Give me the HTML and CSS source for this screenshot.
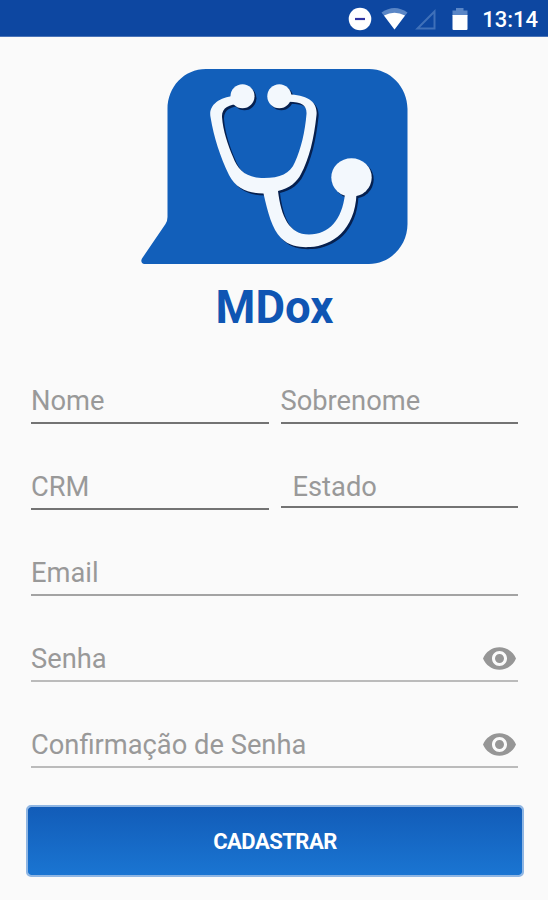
FILE: index.html
```html
<!DOCTYPE html>
<html lang="pt-BR">
<head>
  <meta charset="UTF-8">
  <title>MDox</title>
  <link rel="stylesheet" href="styles.css">
</head>
<body>
  <header class="status-bar">
    <svg class="status-icons" width="124" height="24" viewBox="346 7 124 24">
      <circle cx="360" cy="19" r="11.3" fill="#fff"/>
      <path d="M355 19h10" stroke="#3034a4" stroke-width="2.2"/>
      <path d="M381.500 12.500Q394.500 3.500 407.500 12.500L394.500 29.500Z" fill="#5a86c6"/>
      <path d="M384 15.500Q394.500 10 405 15.500L394.500 29.500Z" fill="#fff"/>
      <path d="M434.500 11.500V28.500H417.500Z" fill="none" stroke="#3f70b9" stroke-width="2"/>
      <path d="M456 8h7.500v2.500h4V16h-15v-5.500H456z" fill="#5a86c6"/>
      <path d="M452.500 15h15v14a1 1 0 0 1-1 1h-13a1 1 0 0 1-1-1z" fill="#fff"/>
    </svg>
    <span class="clock">13:14</span>
  </header>

  <main class="container">
    <svg class="logo" width="268" height="197" viewBox="140 68 268 197">
      <path d="M206 69H369C390 69 407.500 87 407.500 109V224C407.500 246 390 264 369 264H144.500C141.500 264 140.500 261 142 258.500L165.500 224Q167.500 221 167.500 217V109C167.500 87 184 69 206 69Z" fill="#125fba"/>
      <g class="scope-shadow">
        <use href="#scope"/>
      </g>
      <g id="scope">
        <circle cx="242.500" cy="96.300" r="12"/>
        <circle cx="279.300" cy="96.300" r="12"/>
        <ellipse cx="351.500" cy="177.500" rx="20.200" ry="19.300"/>
        <path d="M236 96C222 96 208 104 210.500 117C214 138 220 156 229 175C236 189 249 193.500 263.500 193.500C268 213 272 229 281 238C290 247 302 247.500 310 247C332 246 355 230 356.500 194H345C342 220 329 234.500 309 234.500C289 234.500 281 216 278 191C290 188 297 182 301 174C309 159 314 139 316.500 115C318 101 306 93.500 284 94.500V102C301 101 307 105 306.500 114C305 132 301 149 295 162C290 174 280 178 264 178C246 178 238 170 233 157C228 145 223 131 222 117C221.500 108 229 104 240 104Z"/>
      </g>
    </svg>
    <h1>MDox</h1>

    <form class="form">
      <div class="row">
        <div class="field"><input type="text" placeholder="Nome"></div>
        <div class="field"><input type="text" placeholder="Sobrenome"></div>
      </div>
      <div class="row">
        <div class="field"><input type="text" placeholder="CRM"></div>
        <div class="field select"><input type="text" placeholder="Estado"></div>
      </div>
      <div class="field light"><input type="email" placeholder="Email"></div>
      <div class="field lighter">
        <input type="password" placeholder="Senha">
        <svg class="eye" viewBox="1 4.500 22 15">
          <path d="M12 4.500C7 4.500 2.730 7.610 1 12c1.730 4.390 6 7.500 11 7.500s9.270-3.110 11-7.500c-1.730-4.390-6-7.500-11-7.500zM12 17c-2.760 0-5-2.240-5-5s2.240-5 5-5 5 2.240 5 5-2.240 5-5 5zm0-8c-1.660 0-3 1.340-3 3s1.340 3 3 3 3-1.340 3-3-1.340-3-3-3z"/>
        </svg>
      </div>
      <div class="field lighter">
        <input type="password" placeholder="Confirmação de Senha">
        <svg class="eye" viewBox="1 4.500 22 15">
          <path d="M12 4.500C7 4.500 2.730 7.610 1 12c1.730 4.390 6 7.500 11 7.500s9.270-3.110 11-7.500c-1.730-4.390-6-7.500-11-7.500zM12 17c-2.760 0-5-2.240-5-5s2.240-5 5-5 5 2.240 5 5-2.240 5-5 5zm0-8c-1.660 0-3 1.340-3 3s1.340 3 3 3 3-1.340 3-3-1.340-3-3-3z"/>
        </svg>
      </div>
      <button type="button">CADASTRAR</button>
    </form>
  </main>
</body>
</html>
```
FILE: styles.css
```css
* {
  box-sizing: border-box;
}
body {
  font-family: Roboto, sans-serif;
  background: #fafafa;
  margin: 0;
  height: 900px;
  overflow: hidden;
}
.status-bar {
  display: flex;
  align-items: center;
  justify-content: flex-end;
  gap: 12px;
  height: 37px;
  padding: 2px 10px 0 0;
  background: #0d47a1;
  border-bottom: 1px solid #4a74b8;
  color: #fff;
}
.clock {
  padding-top: 2px;
  font-size: 22px;
  font-weight: 500;
  line-height: 24px;
}
.container {
  padding: 31px 24px 0 26px;
}
.logo {
  display: block;
  margin-left: 114px;
  fill: #f3f8fd;
}
.scope-shadow {
  fill: #06204f;
  transform: translate(2px, 2px);
}
h1 {
  margin: 16px 1px 0 0;
  font-size: 45.5px;
  font-weight: 700;
  line-height: 53px;
  text-align: center;
  color: #0f55b3;
}
.form {
  padding-top: 44px;
}
.row {
  display: flex;
  gap: 12px;
}
.row,
.field {
  margin: 0 6px 40px 5px;
}
.row .field {
  flex: 1;
  margin: 0;
}
.field {
  display: flex;
  align-items: center;
  height: 46px;
  border-bottom: 2px solid #737373;
}
.field input {
  flex: 1;
  width: 100%;
  min-width: 0;
  height: 44px;
  padding: 1px 0 0;
  border: none;
  outline: none;
  background: transparent;
  font-family: inherit;
  font-size: 27.3px;
}
.field input::placeholder {
  color: #999;
  opacity: 1;
}
.field.select {
  height: 44px;
}
.field.select input {
  padding: 3px 0 0 12px;
}
.field.light {
  border-color: #a3a3a3;
}
.field.lighter {
  border-color: #bbb;
}
.eye {
  width: 33px;
  height: 23px;
  margin-right: 2px;
  fill: #969696;
}
button {
  display: block;
  width: 498px;
  height: 72px;
  margin-top: -3px;
  padding: 0;
  border: 2px solid #8fb6e3;
  border-radius: 5px;
  background: linear-gradient(#125cb8, #1a75d2) padding-box;
  font-family: inherit;
  font-size: 22px;
  font-weight: 700;
  letter-spacing: -0.5px;
  color: #fff;
}
```
